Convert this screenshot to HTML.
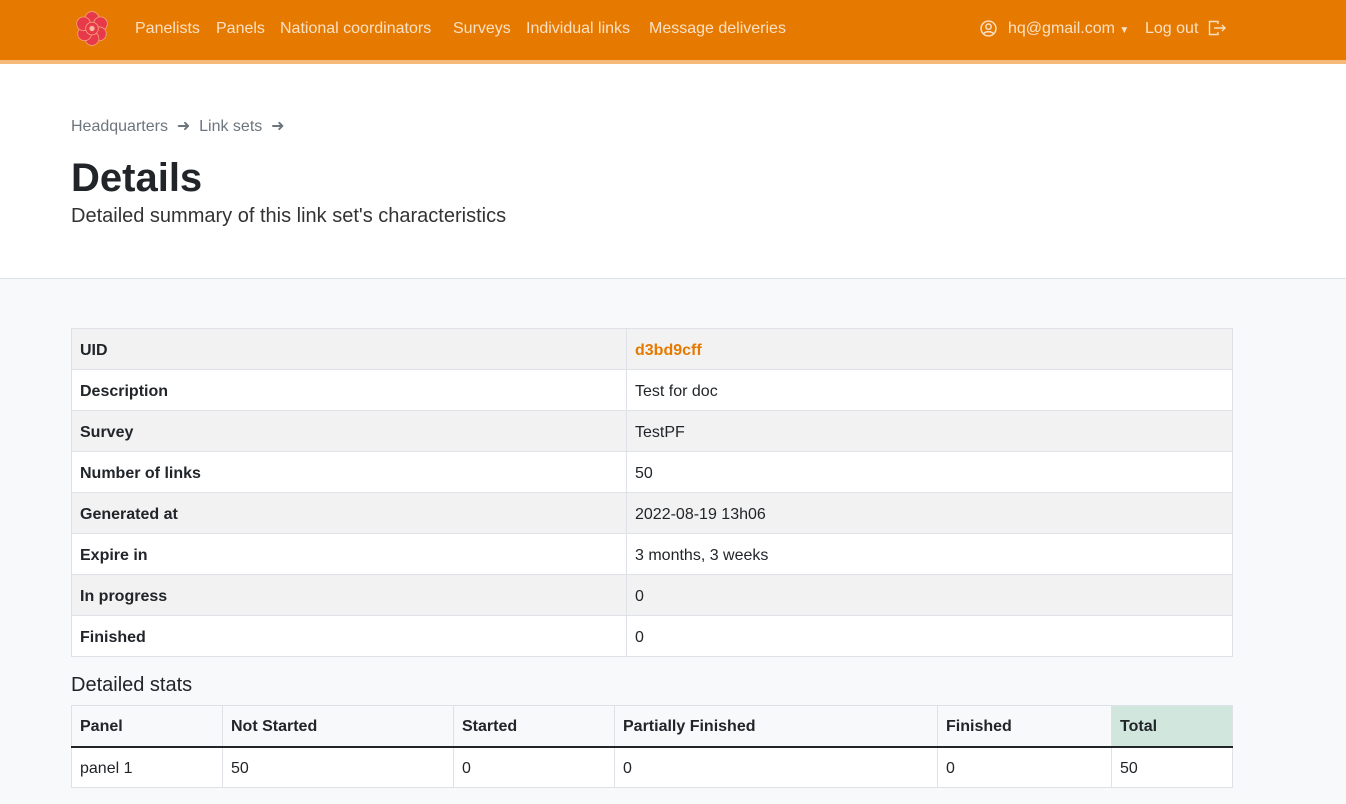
<!DOCTYPE html>
<html><head><meta charset="utf-8"><style>
*{box-sizing:border-box;margin:0;padding:0}
body{width:1346px;height:804px;overflow:hidden;font-family:"Liberation Sans",sans-serif;background:#f8f9fa;color:#212529}
.nav{height:60px;background:#e67a00;position:relative;color:#fbe0c4;font-size:16px}
.stripe{height:4px;background:#f6b978}
.nav span{position:absolute;top:20px}
.head{background:#fff;height:215px;border-bottom:1px solid #dee2e6;position:relative}
.bc{position:absolute;left:71px;top:52px;font-size:16px;color:#6c757d}
h1{position:absolute;left:71px;top:92px;font-size:40px;font-weight:bold}
.sub{position:absolute;left:71px;top:141px;font-size:20px;color:#333}
table{border-collapse:collapse;position:absolute;left:71px;width:1162px;font-size:16px;background:#fff}
td,th{border:1px solid #dee2e6;padding:3px 8px 0;height:41px;text-align:left}
td.k{font-weight:bold;width:555px}
tr.s td{background:#f2f2f2}
</style></head><body>
<div class="nav">
<svg style="position:absolute;left:74px;top:10px" width="36" height="36" viewBox="0 0 34 34">
<g fill="#e8394a" stroke="#f5a07a" stroke-width="0.8">
<circle cx="17" cy="8" r="6.5"/><circle cx="25" cy="13" r="6.5"/><circle cx="24" cy="22.5" r="6.5"/><circle cx="17" cy="27" r="6.5"/><circle cx="10" cy="22.5" r="6.5"/><circle cx="9" cy="13" r="6.5"/><circle cx="17" cy="17.5" r="6"/></g>
<circle cx="17" cy="17.5" r="2.5" fill="#f7b9a0"/></svg>
<span style="left:135px">Panelists</span><span style="left:216px">Panels</span><span style="left:280px">National coordinators</span><span style="left:453px">Surveys</span><span style="left:526px">Individual links</span><span style="left:649px">Message deliveries</span>
<svg style="position:absolute;left:980px;top:20px" width="17" height="17" viewBox="0 0 16 16" fill="none" stroke="#fbe0c4" stroke-width="1.4"><circle cx="8" cy="8" r="7"/><circle cx="8" cy="6.3" r="2.5"/><path d="M3.3 13c1.5-2.6 7.9-2.6 9.4 0"/></svg>
<span style="left:1008px">hq@gmail.com <small style="font-size:10px">▼</small></span>
<span style="left:1145px">Log out</span>
<svg style="position:absolute;left:1208px;top:20px" width="18" height="16" viewBox="0 0 18 16" fill="none" stroke="#fbe0c4" stroke-width="1.4"><path d="M10 4V1.5H1.5v13H10V12M6 8h11M14 5l3 3-3 3"/></svg>
</div>
<div class="stripe"></div>
<div class="head">
<div class="bc">Headquarters &nbsp;➜&nbsp; Link sets &nbsp;➜</div>
<h1>Details</h1>
<div class="sub">Detailed summary of this link set's characteristics</div>
</div>
<table style="top:328px">
<tr class="s"><td class="k">UID</td><td style="color:#e67a00;font-weight:bold">d3bd9cff</td></tr>
<tr><td class="k">Description</td><td>Test for doc</td></tr>
<tr class="s"><td class="k">Survey</td><td>TestPF</td></tr>
<tr><td class="k">Number of links</td><td>50</td></tr>
<tr class="s"><td class="k">Generated at</td><td>2022-08-19 13h06</td></tr>
<tr><td class="k">Expire in</td><td>3 months, 3 weeks</td></tr>
<tr class="s"><td class="k">In progress</td><td>0</td></tr>
<tr><td class="k">Finished</td><td>0</td></tr>
</table>
<div style="position:absolute;left:71px;top:674px;font-size:20px">Detailed stats</div>
<table style="top:705px">
<tr style="background:#f8f9fa"><th style="width:151px;border-bottom:2px solid #212529">Panel</th><th style="width:231px;border-bottom:2px solid #212529">Not Started</th><th style="width:161px;border-bottom:2px solid #212529">Started</th><th style="width:323px;border-bottom:2px solid #212529">Partially Finished</th><th style="width:174px;border-bottom:2px solid #212529">Finished</th><th style="background:#d1e7dd;border-bottom:2px solid #212529">Total</th></tr>
<tr><td>panel 1</td><td>50</td><td>0</td><td>0</td><td>0</td><td>50</td></tr>
</table>
</body></html>
